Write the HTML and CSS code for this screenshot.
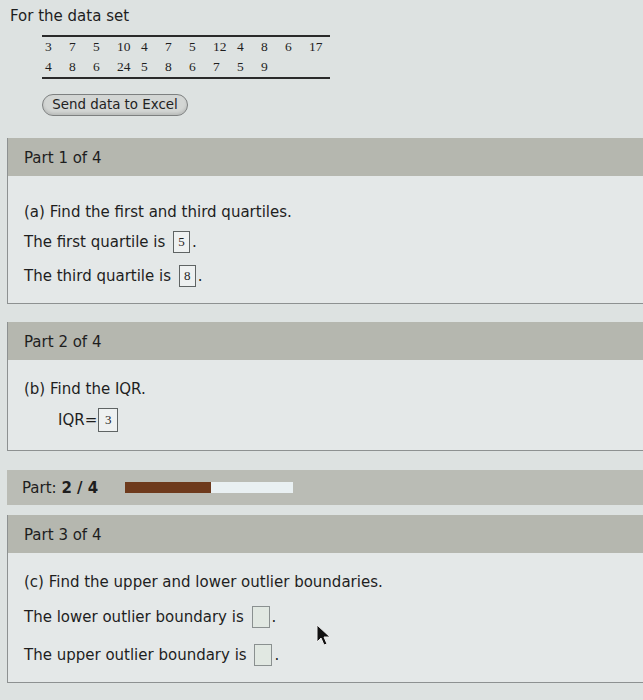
FILE: index.html
```html
<!DOCTYPE html>
<html>
<head>
<meta charset="utf-8">
<link rel="stylesheet" href="styles.css">
</head>
<body>
<div class="page">
  <div class="intro">
    <div class="title">For the data set</div>
    <div class="data">
      <div class="row">
        <span>3</span><span>7</span><span>5</span><span>10</span><span>4</span><span>7</span><span>5</span><span>12</span><span>4</span><span>8</span><span>6</span><span>17</span>
      </div>
      <div class="row">
        <span>4</span><span>8</span><span>6</span><span>24</span><span>5</span><span>8</span><span>6</span><span>7</span><span>5</span><span>9</span><span></span><span></span>
      </div>
    </div>
    <div class="btn">Send data to Excel</div>
  </div>

  <div class="panel p1">
    <div class="head">Part 1 of 4</div>
    <div class="body b1">
      <div class="line">(a) Find the first and third quartiles.</div>
      <div class="line l2">The first quartile is <span class="ans">5</span>.</div>
      <div class="line l3">The third quartile is <span class="ans">8</span>.</div>
    </div>
  </div>

  <div class="panel p2">
    <div class="head">Part 2 of 4</div>
    <div class="body b2">
      <div class="line">(b) Find the IQR.</div>
      <div class="line l2 indent">IQR=<span class="ans tight">3</span></div>
    </div>
  </div>

  <div class="progress">
    <span class="plabel">Part: <b>2 / 4</b></span>
    <div class="track"><div class="fill" style="width:51%"></div></div>
  </div>

  <div class="panel p3">
    <div class="head">Part 3 of 4</div>
    <div class="body b3">
      <div class="line">(c) Find the upper and lower outlier boundaries.</div>
      <div class="line l2">The lower outlier boundary is <span class="ans empty"></span>.</div>
      <div class="line l3">The upper outlier boundary is <span class="ans empty"></span>.</div>
    </div>
  </div>

  <svg class="cursor" width="16" height="24" viewBox="0 0 16 24">
    <path d="M1 1 L1 18 L5 14 L8 21 L11 20 L8 13 L14 13 Z" fill="#111" stroke="#eee" stroke-width="1"/>
  </svg>
</div>
</body>
</html>
```

FILE: styles.css
```css
html, body {
  margin: 0;
  padding: 0;
  background: #dde2e1;
}
.page {
  position: relative;
  width: 643px;
  height: 700px;
  overflow: hidden;
  font-family: "DejaVu Sans", Verdana, sans-serif;
  font-size: 15px;
  color: #1e1e1e;
}
.intro {
  padding: 7px 0 0 10px;
}
.title {
  font-size: 15px;
  line-height: 18px;
}
.data {
  margin: 10px 0 0 32px;
  width: 288px;
  border-top: 2px solid #2a2a2a;
  border-bottom: 2px solid #2a2a2a;
  font-family: "Liberation Serif", "Times New Roman", serif;
  font-size: 13.5px;
}
.row {
  display: grid;
  grid-template-columns: repeat(12, 24px);
  height: 20px;
  align-items: center;
}
.row span {
  padding-left: 3px;
}
.btn {
  margin: 15px 0 0 32px;
  width: 144px;
  height: 20px;
  border: 1px solid #7d8080;
  border-radius: 11px;
  background: #d3d6d4;
  box-shadow: inset 0 -2px 3px rgba(0,0,0,0.12);
  font-size: 13.4px;
  line-height: 20px;
  text-align: center;
  color: #222;
}
.panel {
  margin-left: 7px;
  border-left: 1px solid #8d9191;
  border-bottom: 1px solid #8d9191;
  background: #e4e8e8;
}
.p1 { margin-top: 22px; }
.p2 { margin-top: 18px; }
.p3 { margin-top: 10px; }
.head {
  height: 38px;
  background: #b5b7af;
  display: flex;
  align-items: center;
  padding-left: 16px;
  padding-top: 2px;
  box-sizing: border-box;
}
.body {
  padding-left: 16px;
}
.b1 { padding-top: 24px; padding-bottom: 15px; }
.b2 { padding-top: 17px; padding-bottom: 18px; }
.b3 { padding-top: 17px; padding-bottom: 15px; }
.line {
  height: 24px;
  display: flex;
  align-items: center;
  white-space: pre;
}
.b1 .l2 { margin-top: 6px; }
.b1 .l3 { margin-top: 10px; }
.b2 .l2 { margin-top: 7px; }
.b3 .l2 { margin-top: 11px; }
.b3 .l3 { margin-top: 14px; }
.indent { padding-left: 34px; }
.ans {
  display: inline-flex;
  align-items: center;
  justify-content: center;
  width: 15px;
  height: 20px;
  margin-left: 3px;
  margin-right: 2px;
  border: 1px solid #5f6464;
  background: #eef1f1;
  font-family: "Liberation Serif", "Times New Roman", serif;
  font-size: 13px;
}
.ans.tight { margin-left: 1px; width: 18px; height: 22px; }
.ans.empty {
  width: 16px;
  height: 20px;
  border-color: #8a9090;
  background: #e1e8e2;
}
.progress {
  margin: 19px 0 0 7px;
  height: 35px;
  background: #babcb5;
  display: flex;
  align-items: center;
  padding-left: 15px;
}
.plabel {
  width: 103px;
}
.plabel b {
  font-weight: bold;
}
.track {
  width: 168px;
  height: 11px;
  background: #e9f0f2;
}
.fill {
  height: 100%;
  background: #6e3a1c;
}
.cursor {
  position: absolute;
  left: 316px;
  top: 624px;
}
```
